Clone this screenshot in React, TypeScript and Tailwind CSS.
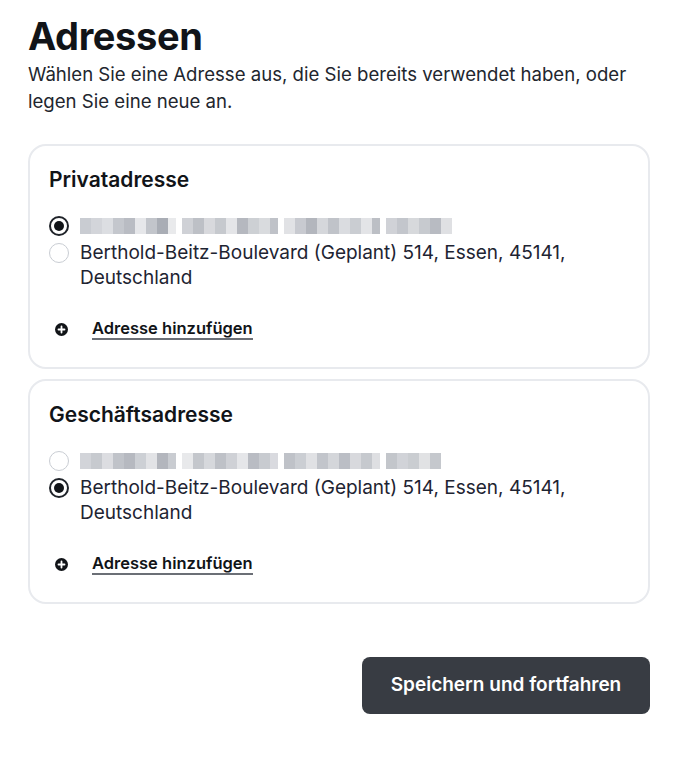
import { useState } from "react";

type AddressGroup = {
  title: string;
  selected: number;
  mosaic: string[];
};

const groups: AddressGroup[] = [
  {
    title: "Privatadresse",
    selected: 0,
    mosaic: [
      "#c9ccd2", "#d3d5da", "#dcdee2", "#c4c7cd", "#b9bcc3", "#e6e7ea", "#c2c5cb", "#a9adb5", "#e9eaec",
      "#cfd1d6", "#bdc0c6", "#d8d9dd", "#c6c9ce", "#e4e5e8", "#b5b8bf", "#cdd0d4", "#d9dbde", "#bfc2c8",
      "#e1e2e5", "#c8cad0", "#b3b6bd", "#d5d7db", "#c0c3c9", "#dadce0", "#cacdd2", "#e3e4e7", "#bcbfc5",
      "#d0d2d7", "#c3c6cc", "#d7d9dc", "#c7cacf", "#b8bbc2", "#dfe0e3",
    ],
  },
  {
    title: "Geschäftsadresse",
    selected: 1,
    mosaic: [
      "#d2d4d9", "#c7cacf", "#dcdde1", "#c0c3c9", "#b6b9c0", "#cdd0d5", "#e2e3e6", "#b3b6bd", "#c9ccd1",
      "#e8e9eb", "#c4c7cc", "#d6d8dc", "#bec1c7", "#cfd1d6", "#e5e6e9", "#b9bcc3", "#c8cbd0", "#d9dadf",
      "#bfc2c8", "#cbced3", "#e0e1e4", "#c2c5cb", "#d4d6da", "#bbbec5", "#d8d9dd", "#c6c9ce", "#dedfe2",
      "#c3c6cb", "#d1d3d8", "#cacdd1", "#e1e2e4", "#c5c8cd",
    ],
  },
];

function Mosaic({ colors }: { colors: string[] }) {
  return (
    <div className="flex h-[16px] items-stretch">
      {colors.map((color, i) => (
        <span
          key={i}
          className={i % 9 === 8 ? "mr-[6px] w-[8px]" : "w-[11px]"}
          style={{ backgroundColor: color }}
        />
      ))}
    </div>
  );
}

function Radio({ checked }: { checked: boolean }) {
  if (checked) {
    return (
      <span className="flex h-5 w-5 shrink-0 items-center justify-center rounded-full border-2 border-[#1f2329] bg-white">
        <span className="h-[10px] w-[10px] rounded-full bg-[#111418]" />
      </span>
    );
  }
  return <span className="block h-5 w-5 shrink-0 rounded-full border border-[#c9cdd3] bg-white" />;
}

function PlusIcon() {
  return (
    <svg width="13" height="13" viewBox="0 0 13 13" className="shrink-0">
      <circle cx="6.5" cy="6.5" r="6.5" fill="#111418" />
      <path d="M6.5 3.5v6M3.5 6.5h6" stroke="#fff" strokeWidth="1.8" strokeLinecap="round" />
    </svg>
  );
}

function AddressCard({ group }: { group: AddressGroup }) {
  const [selected, setSelected] = useState(group.selected);

  return (
    <section className="rounded-[18px] border-2 border-[#e8eaee] bg-white px-[19px] pb-[27px] pt-[20px]">
      <h2 className="text-[21px] font-semibold leading-7 text-[#111418]">{group.title}</h2>
      <div className="mt-[19px] flex flex-col gap-[2px]">
        <label className="flex h-[25px] cursor-pointer items-center gap-[11px]" onClick={() => setSelected(0)}>
          <Radio checked={selected === 0} />
          <Mosaic colors={group.mosaic} />
        </label>
        <label
          className="flex cursor-pointer items-start gap-[11px] text-[19px] leading-[25px] text-[#1e2432]"
          onClick={() => setSelected(1)}
        >
          <span className="mt-[3px] shrink-0">
            <Radio checked={selected === 1} />
          </span>
          <span>
            Berthold-Beitz-Boulevard (Geplant) 514, Essen, 45141,
            <br />
            Deutschland
          </span>
        </label>
      </div>
      <button className="mt-[28px] flex items-center gap-[24px] pl-[6px]">
        <PlusIcon />
        <span className="border-b-2 border-[#6b6f76] text-[16.5px] font-semibold leading-5 text-[#111418]">
          Adresse hinzufügen
        </span>
      </button>
    </section>
  );
}

export default function App() {
  return (
    <div className="min-h-[763px] bg-white px-[28px] pt-[13px] font-['Inter',_sans-serif]">
      <h1 className="text-[38px] font-bold leading-[46px] tracking-[-0.01em] text-[#111418]">Adressen</h1>
      <p className="mt-[2px] w-[610px] text-[18.6px] leading-[27px] text-[#22262e]">
        Wählen Sie eine Adresse aus, die Sie bereits verwendet haben, oder legen Sie eine neue an.
      </p>
      <div className="mt-[29px] flex w-[622px] flex-col gap-[10px]">
        {groups.map((group) => (
          <AddressCard key={group.title} group={group} />
        ))}
      </div>
      <div className="mt-[53px] flex w-[622px] justify-end">
        <button className="h-[57px] w-[288px] rounded-lg bg-[#383c43] text-[19px] font-semibold text-white">
          Speichern und fortfahren
        </button>
      </div>
    </div>
  );
}
